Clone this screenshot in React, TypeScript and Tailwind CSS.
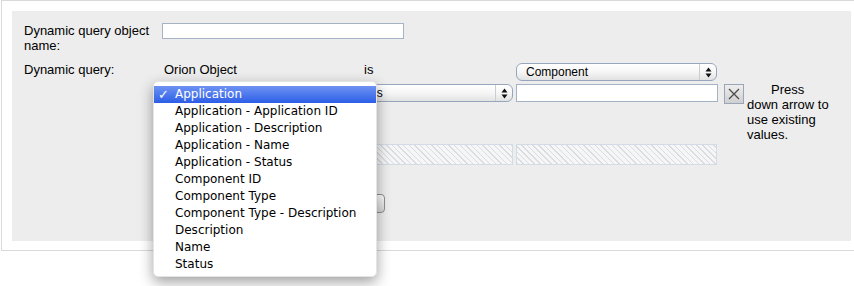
import React from 'react';

const menuItems = [
  'Application',
  'Application - Application ID',
  'Application - Description',
  'Application - Name',
  'Application - Status',
  'Component ID',
  'Component Type',
  'Component Type - Description',
  'Description',
  'Name',
  'Status',
];

const hatch =
  'bg-[repeating-linear-gradient(45deg,#d9dde3_0px,#d9dde3_1px,#f6f6f6_1px,#f6f6f6_4px)]';

function Arrows() {
  return (
    <svg width="7" height="11" viewBox="0 0 7 11">
      <path d="M3.5 0.5 L6.5 4.5 L0.5 4.5 Z" fill="#111" />
      <path d="M3.5 10.5 L6.5 6.5 L0.5 6.5 Z" fill="#111" />
    </svg>
  );
}

function MacSelect({ label, width }: { label: string; width: string }) {
  return (
    <div
      className={`${width} h-[18px] flex items-center rounded-[6px] border border-[#98a6bd] bg-gradient-to-b from-white via-[#f6f6f6] to-[#e2e2e2] shadow-[inset_0_1px_0_#fff]`}
    >
      <div className="flex-1 pl-[9px] text-[12px] leading-[16px] text-black truncate">{label}</div>
      <div className="w-[17px] h-full border-l border-[#c9cdd4] flex items-center justify-center">
        <Arrows />
      </div>
    </div>
  );
}

function Popup() {
  return (
    <div className="absolute left-[-9px] top-[-3px] z-10 w-[224px] rounded-[5px] bg-white pt-[4px] pb-[3px] shadow-[0_5px_14px_rgba(0,0,0,0.38)] border border-[#e4e4e4] font-['DejaVu_Sans',sans-serif] text-[12px]">
      {menuItems.map((item, i) => (
        <div
          key={item + i}
          className={
            i === 0
              ? 'relative h-[17px] leading-[17px] pl-[21px] text-white bg-gradient-to-b from-[#6f92f2] to-[#2c5de6]'
              : 'h-[17px] leading-[17px] pl-[21px] text-black'
          }
        >
          {i === 0 && <span className="absolute left-[4px] top-0 text-[13px] font-bold">✓</span>}
          {item}
        </div>
      ))}
    </div>
  );
}

export default function App() {
  return (
    <div className="w-[854px] h-[286px] overflow-hidden bg-white font-['Liberation_Sans',Arial,sans-serif] text-[13px] leading-[15px] text-black">
      <div className="ml-[1px] w-[853px] border-t border-l border-b border-[#d9d9d9] pl-[10px] pt-[10px] pb-[9px] pr-[3px]">
        <div className="h-[230px] bg-[#ededed] pl-[12px] pt-[12px]">
          {/* object name */}
          <div className="flex items-start">
            <div className="w-[138px] shrink-0 pr-[6px]">Dynamic query object name:</div>
            <div className="w-[242px] h-[16px] bg-white border border-[#a6b2c6]" />
          </div>

          {/* query */}
          <div className="flex items-start mt-[9px]">
            <div className="w-[138px] shrink-0">Dynamic query:</div>
            <div className="grid grid-cols-[202px_152px_208px_23px_92px] items-start">
              {/* headers */}
              <div className="pl-[2px]">Orion Object</div>
              <div>is</div>
              <div className="mt-[1px]">
                <MacSelect label="Component" width="w-[201px]" />
              </div>
              <div />
              <div />

              {/* controls */}
              <div className="relative mt-[3px]">
                <MacSelect label="" width="w-[200px]" />
                <Popup />
              </div>
              <div className="mt-[3px]">
                <MacSelect label="is" width="w-[149px]" />
              </div>
              <div className="mt-[3px] w-[202px] h-[18px] bg-white border border-[#a6b2c6]" />
              <div className="mt-[3px] w-[20px] h-[20px] border border-[#9aa6b8] bg-gradient-to-b from-[#eeeeee] to-[#cfcfcf] flex items-center justify-center">
                <svg width="12" height="12" viewBox="0 0 12 12">
                  <path d="M1 1 L11 11 M11 1 L1 11" stroke="#4a4a4a" strokeWidth="1.3" />
                </svg>
              </div>
              <div className="mt-[1px]">
                <div className="indent-[24px]">Press</div>
                <div>down arrow to use existing values.</div>
              </div>

              {/* disabled values */}
              <div className="mt-[2px]" />
              <div className={`mt-[2px] w-[149px] h-[21px] border border-[#d3dbe6] ${hatch}`} />
              <div className={`mt-[2px] w-[201px] h-[21px] border border-[#d3dbe6] ${hatch}`} />
              <div />
              <div />

              {/* buttons */}
              <div className="col-span-2 mt-[29px] flex items-center">
                <div className="ml-[1px] w-[124px] h-[19px] rounded-[4px] border border-[#8f8f8f] bg-gradient-to-b from-white to-[#dcdcdc]" />
                <div className="ml-[36px] w-[62px] h-[19px] rounded-[4px] border border-[#8f8f8f] bg-gradient-to-b from-white to-[#d6d6d6]" />
              </div>
            </div>
          </div>
        </div>
      </div>
    </div>
  );
}
